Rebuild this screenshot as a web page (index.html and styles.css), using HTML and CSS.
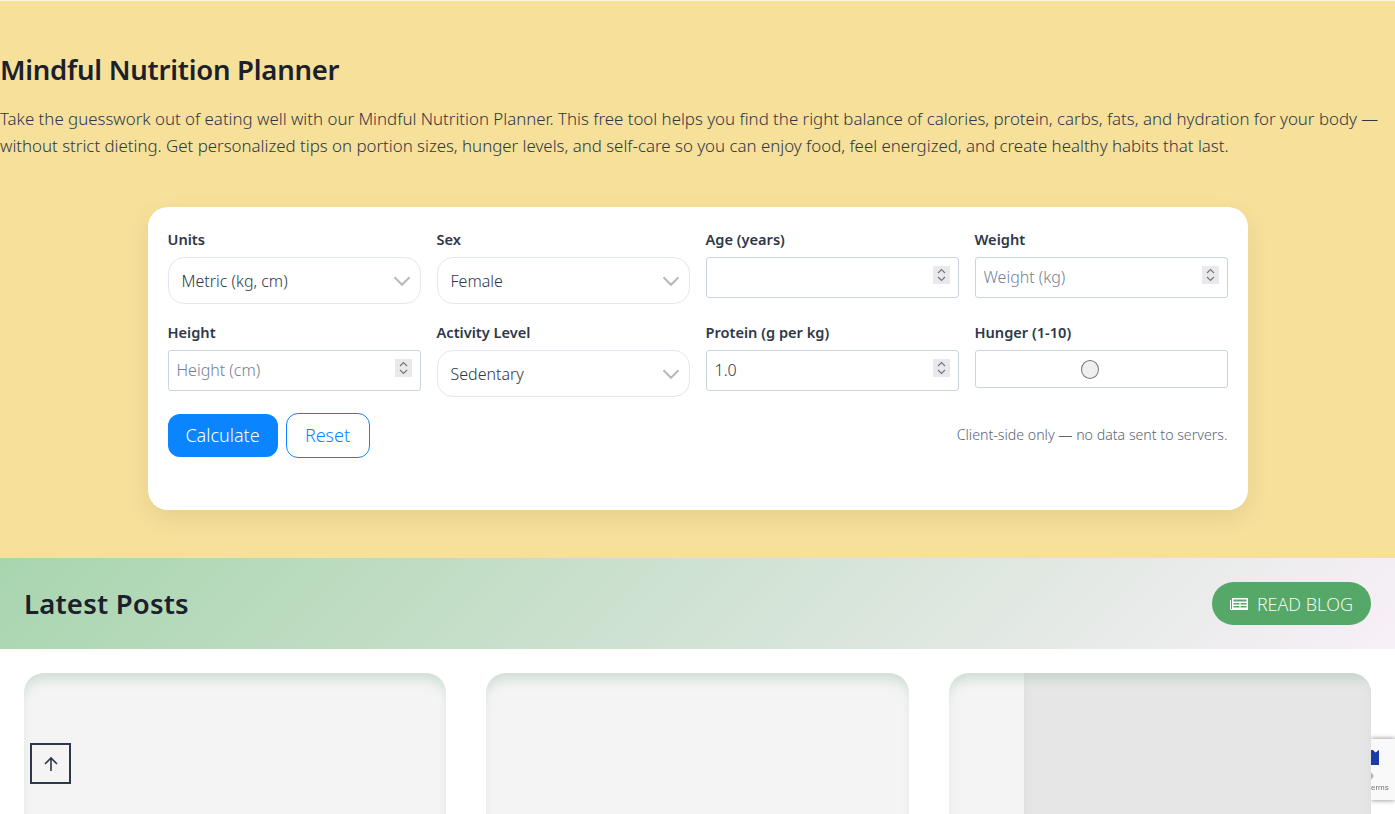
FILE: index.html
```html
<!DOCTYPE html>
<html lang="en">
<head>
    <meta charset="UTF-8">
    <meta name="viewport" content="width=device-width, initial-scale=1.0">
    <title>Mindful Nutrition Planner</title>
    <link rel="stylesheet" href="styles.css">
</head>
<body>
    <section class="planner">
        <h1>Mindful Nutrition Planner</h1>
        <p class="intro">Take the guesswork out of eating well with our Mindful Nutrition Planner. This free tool helps you find the right balance of calories, protein, carbs, fats, and hydration for your body — without strict dieting. Get personalized tips on portion sizes, hunger levels, and self-care so you can enjoy food, feel energized, and create healthy habits that last.</p>

        <form class="planner-card">
            <div class="form-grid">
                <div class="form-group">
                    <label for="units">Units</label>
                    <select id="units"><option>Metric (kg, cm)</option><option>Imperial (lb, in)</option></select>
                </div>
                <div class="form-group">
                    <label for="sex">Sex</label>
                    <select id="sex"><option>Female</option><option>Male</option></select>
                </div>
                <div class="form-group">
                    <label for="age">Age (years)</label>
                    <input type="number" id="age">
                </div>
                <div class="form-group">
                    <label for="weight">Weight</label>
                    <input type="number" id="weight" placeholder="Weight (kg)">
                </div>
                <div class="form-group">
                    <label for="height">Height</label>
                    <input type="number" id="height" placeholder="Height (cm)">
                </div>
                <div class="form-group">
                    <label for="activity">Activity Level</label>
                    <select id="activity"><option>Sedentary</option><option>Light</option><option>Moderate</option><option>Active</option></select>
                </div>
                <div class="form-group">
                    <label for="protein">Protein (g per kg)</label>
                    <input type="number" id="protein" value="1.0" step="0.1">
                </div>
                <div class="form-group">
                    <label for="hunger">Hunger (1-10)</label>
                    <input type="range" id="hunger" min="1" max="10" value="5">
                </div>
            </div>
            <div class="form-actions">
                <button type="button" class="boton-calcular">Calculate</button>
                <button type="reset" class="boton-reset">Reset</button>
                <span class="privacy-note">Client-side only — no data sent to servers.</span>
            </div>
        </form>
    </section>

    <section class="posts">
        <div class="posts-header">
            <h2>Latest Posts</h2>
            <a href="#" class="boton-blog">
                <svg class="blog-icon" viewBox="0 0 18 14" width="18" height="14" aria-hidden="true">
                    <path fill="currentColor" d="M2 1h16v12H1.500A1.500 1.500 0 0 1 0 11.500V3h1v8.500a.5.5 0 0 0 1 0z"/>
                    <path fill="#55a868" d="M3.500 2.500h13v2h-13zM3.500 6h6v1.500h-6zM3.500 9h6v1.500h-6zM10.500 6h6v1.500h-6zM10.500 9h6v1.500h-6z"/>
                </svg>
                READ BLOG
            </a>
        </div>
        <div class="posts-grid">
            <article class="post-card"></article>
            <article class="post-card"></article>
            <article class="post-card post-card-image"><div class="post-thumb"></div></article>
        </div>
    </section>

    <a href="#" class="back-top" aria-label="Back to top">
        <svg viewBox="0 0 16 16" width="16" height="16" fill="none" stroke="currentColor" stroke-width="1.6" aria-hidden="true">
            <path d="M8 15V2M2 8l6-6 6 6"/>
        </svg>
    </a>

    <div class="recaptcha-badge">
        <svg viewBox="0 0 24 30" width="24" height="30" aria-hidden="true">
            <path fill="#1c3aa9" d="M0 0h2l2.500 2.500L8 0v15H0z"/>
            <path fill="#bbb" d="M0 22l3 4-3 4z"/>
        </svg>
        <span class="recaptcha-text">erms</span>
    </div>
</body>
</html>
```

FILE: styles.css
```css
html {
    height: 100%;
    overflow: hidden;
}
body {
    margin: 0;
    font-family: "Noto Sans", Arial, sans-serif;
    color: #2d3748;
    background-color: #fff;
}
.planner {
    background-color: #f6e09a;
    border-top: 1px solid #fdf6dc;
    padding: 48px 0 48px;
}
.planner h1 {
    margin: 0 0 14px;
    font-size: 27.5px;
    line-height: 42px;
    font-weight: 600;
    letter-spacing: -0.25px;
    color: #1a202c;
}
.intro {
    margin: 0 0 48px;
    font-size: 16.85px;
    line-height: 27px;
    font-weight: 300;
}
.planner-card {
    width: 1100px;
    height: 303px;
    box-sizing: border-box;
    margin: 0 auto;
    padding: 23px 20px;
    background-color: #fff;
    border-radius: 20px;
    box-shadow: 0px 8px 24px rgba(0, 0, 0, 0.08);
}
.form-grid {
    display: grid;
    grid-template-columns: repeat(4, 1fr);
    column-gap: 16px;
    row-gap: 19px;
    align-items: start;
}
.form-group label {
    display: block;
    font-size: 14.6px;
    line-height: 18px;
    font-weight: 600;
    margin-bottom: 9px;
}
.form-group input, .form-group select {
    display: block;
    width: 100%;
    box-sizing: border-box;
    font-family: inherit;
    font-size: 16px;
    font-weight: 300;
    color: #2d3748;
    background-color: #fff;
}
.form-group input {
    height: 41px;
    padding: 7px 8px 9px;
    border: 1px solid #cbd5e0;
    border-radius: 3px;
}
.form-group input::placeholder {
    color: #718096;
}
.form-group input::-webkit-inner-spin-button {
    appearance: none;
    opacity: 1;
    width: 17px;
    height: 18px;
    background-color: #e9e9ed;
    background-image: url("data:image/svg+xml,%3Csvg xmlns='http://www.w3.org/2000/svg' viewBox='0 0 17 18'%3E%3Cpath fill='none' stroke='%23777' stroke-width='1.2' d='M5 7l3.500-3.500L12 7M5 11l3.500 3.500L12 11'/%3E%3C/svg%3E");
    background-repeat: no-repeat;
}
.form-group select {
    appearance: none;
    height: 47px;
    padding: 0 36px 0 13px;
    border: 1px solid #e2e8f0;
    border-radius: 16px;
    background-image: url("data:image/svg+xml,%3Csvg xmlns='http://www.w3.org/2000/svg' viewBox='0 0 16 16'%3E%3Cpath fill='none' stroke='%23b8b8b8' stroke-width='1.6' d='M2 5l6 6 6-6'/%3E%3C/svg%3E");
    background-repeat: no-repeat;
    background-position: right 8px center;
    background-size: 20px 20px;
}
.form-group input[type="range"] {
    appearance: none;
    height: 38px;
    margin: 0;
    padding: 0 0 0 4px;
}
.form-group input[type="range"]::-webkit-slider-thumb {
    appearance: none;
    width: 18px;
    height: 19px;
    border: 1px solid #767676;
    border-radius: 50%;
    background-color: #efefef;
}
.form-actions {
    display: flex;
    align-items: center;
    gap: 8px;
    margin-top: 16px;
}
.form-actions button {
    font-family: inherit;
    font-size: 18px;
    font-weight: 300;
    cursor: pointer;
}
.boton-calcular {
    width: 110px;
    height: 43px;
    padding: 0 0 2px;
    color: #fff;
    background-color: #0a84ff;
    border: none;
    border-radius: 12px;
}
.boton-reset {
    width: 84px;
    height: 45px;
    padding: 0 0 2px;
    color: #0a84ff;
    background-color: #fff;
    border: 1px solid #0a84ff;
    border-radius: 12px;
}
.privacy-note {
    margin-left: auto;
    margin-bottom: 2px;
    font-size: 14.2px;
    font-weight: 300;
    color: #5a6472;
}
.posts-header {
    display: flex;
    justify-content: space-between;
    align-items: center;
    height: 91px;
    box-sizing: border-box;
    padding: 0 24px;
    background: linear-gradient(135deg, #a8d5ae, #f8f0f8);
}
.posts-header h2 {
    margin: 0;
    font-size: 27.5px;
    font-weight: 600;
    letter-spacing: 0.2px;
    color: #1a202c;
}
.boton-blog {
    display: flex;
    align-items: center;
    gap: 9px;
    height: 43px;
    padding: 0 18px;
    color: #fff;
    background-color: #55a868;
    border-radius: 22px;
    font-family: "Open Sans", sans-serif;
    font-size: 18px;
    font-weight: 350;
    text-decoration: none;
}
.posts-grid {
    display: grid;
    grid-template-columns: repeat(3, 1fr);
    gap: 40px;
    padding: 24px;
}
.post-card {
    height: 400px;
    background-color: #f4f4f4;
    border-radius: 20px;
    overflow: hidden;
    box-shadow: inset 0 10px 12px -4px rgba(120, 170, 135, 0.3);
}
.post-card-image {
    display: flex;
    justify-content: flex-end;
}
.post-thumb {
    width: 347px;
    background-color: #e6e6e6;
    box-shadow: inset 0 10px 12px -4px rgba(120, 170, 135, 0.3);
}
.back-top {
    position: fixed;
    left: 30px;
    top: 743px;
    width: 41px;
    height: 41px;
    box-sizing: border-box;
    display: flex;
    align-items: center;
    justify-content: center;
    border: 2px solid #2d3748;
    color: #2d3748;
}
.recaptcha-badge {
    position: fixed;
    right: 0;
    top: 739px;
    width: 24px;
    height: 61px;
    box-sizing: border-box;
    padding-top: 11px;
    background-color: #f9f9f9;
    box-shadow: 0 0 5px rgba(0, 0, 0, 0.5);
    clip-path: inset(-6px 0 -6px 0);
}
.recaptcha-badge svg {
    display: block;
}
.recaptcha-text {
    display: block;
    margin-top: 3px;
    font-size: 8px;
    line-height: 10px;
    color: #777;
    font-family: "Liberation Sans", sans-serif;
}
```
